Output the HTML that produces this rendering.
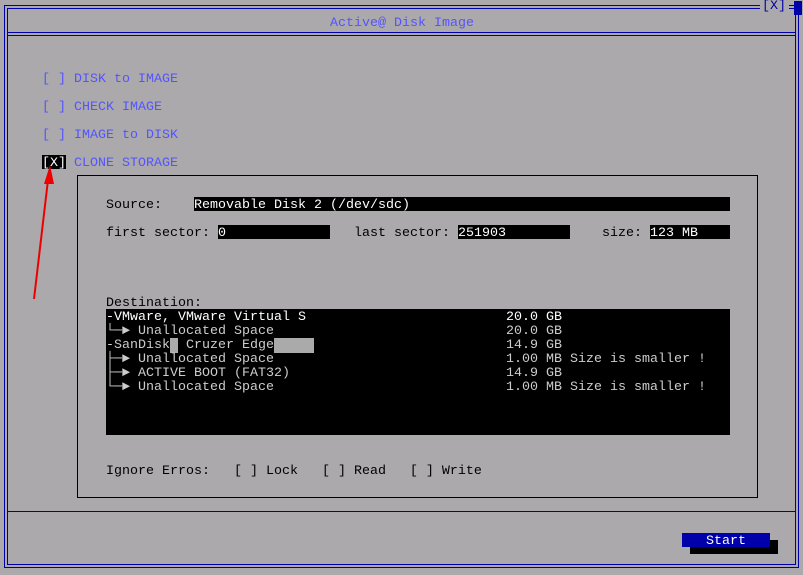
<!DOCTYPE html>
<html><head><style>
*{margin:0;padding:0;box-sizing:border-box}
body{width:803px;height:575px;background:#aba9ab;position:relative;overflow:hidden;font-family:"Liberation Mono",monospace;font-size:13.33px;line-height:14px}
.a{position:absolute;white-space:pre}
.t{padding-top:2px}
.l{position:absolute;background:#0000aa}
.b{color:#5454ff}
.k{color:#000}
.f{position:absolute;background:#000;color:#fff;white-space:pre;height:14px}
.f span.x{position:relative;top:2px}
</style></head><body>
<div class="l" style="left:4px;top:5px;width:794px;height:1px"></div>
<div class="l" style="left:7px;top:8px;width:788px;height:1px"></div>
<div class="l" style="left:4px;top:5px;width:1px;height:563px"></div>
<div class="l" style="left:7px;top:8px;width:1px;height:557px"></div>
<div class="l" style="left:798px;top:5px;width:1px;height:563px"></div>
<div class="l" style="left:795px;top:8px;width:1px;height:557px"></div>
<div class="l" style="left:4px;top:567px;width:795px;height:1px"></div>
<div class="l" style="left:7px;top:564px;width:789px;height:1px"></div>
<div class="l" style="left:7px;top:32px;width:789px;height:1px"></div>
<div class="l" style="left:7px;top:35px;width:789px;height:1px"></div>
<div class="l" style="left:7px;top:511px;width:789px;height:1px"></div>
<div class="a" style="left:760px;top:1px;width:29px;height:12px;background:#aba9ab"></div>
<div class="a b" style="left:762px;top:0px;color:#0000aa">[X]</div>
<div class="l" style="left:794px;top:1px;width:8px;height:14px"></div>
<div class="a b t" style="left:330px;top:15px">Active@ Disk Image</div>
<div class="a b t" style="left:42px;top:71px">[ ] DISK to IMAGE</div>
<div class="a b t" style="left:42px;top:99px">[ ] CHECK IMAGE</div>
<div class="a b t" style="left:42px;top:127px">[ ] IMAGE to DISK</div>
<div class="f" style="left:42px;top:155px;width:24px"><span class="x">[X]</span></div>
<div class="a b t" style="left:74px;top:155px">CLONE STORAGE</div>
<svg class="a" style="left:0;top:0" width="803" height="575"><line x1="34" y1="299" x2="48" y2="180" stroke="#e00" stroke-width="2"/><polygon points="50,165 44,184 54,184" fill="#e00"/></svg>
<div class="a" style="left:77px;top:175px;width:681px;height:323px;border:1px solid #000"></div>
<div class="a k t" style="left:106px;top:197px">Source:</div>
<div class="f" style="left:194px;top:197px;width:536px"><span class="x">Removable Disk 2 (/dev/sdc)</span></div>
<div class="a k t" style="left:106px;top:225px">first sector:</div>
<div class="f" style="left:218px;top:225px;width:112px"><span class="x">0</span></div>
<div class="a k t" style="left:354px;top:225px">last sector:</div>
<div class="f" style="left:458px;top:225px;width:112px"><span class="x">251903</span></div>
<div class="a k t" style="left:602px;top:225px">size:</div>
<div class="f" style="left:650px;top:225px;width:80px"><span class="x">123 MB</span></div>
<div class="a k t" style="left:106px;top:295px">Destination:</div>
<div class="f" style="left:106px;top:309px;width:624px;height:126px;color:#ccc;padding-top:2px"><span style="color:#fff">-VMware, VMware Virtual S</span>
└─► Unallocated Space
-SanDisk<span style="background:#aaa"> </span> Cruzer Edge<span style="background:#aaa">     </span>
├─► Unallocated Space
├─► ACTIVE BOOT (FAT32)
└─► Unallocated Space</div>
<div class="a t" style="left:506px;top:309px;color:#ccc"><span style="color:#fff">20.0 GB</span>
20.0 GB
14.9 GB
1.00 MB Size is smaller !
14.9 GB
1.00 MB Size is smaller !</div>
<div class="a k t" style="left:106px;top:463px">Ignore Erros:   [ ] Lock   [ ] Read   [ ] Write</div>
<div class="a" style="left:690px;top:540px;width:88px;height:14px;background:#000"></div>
<div class="f" style="left:682px;top:533px;width:88px;background:#0000aa;text-align:center"><span class="x">Start</span></div>
</body></html>
